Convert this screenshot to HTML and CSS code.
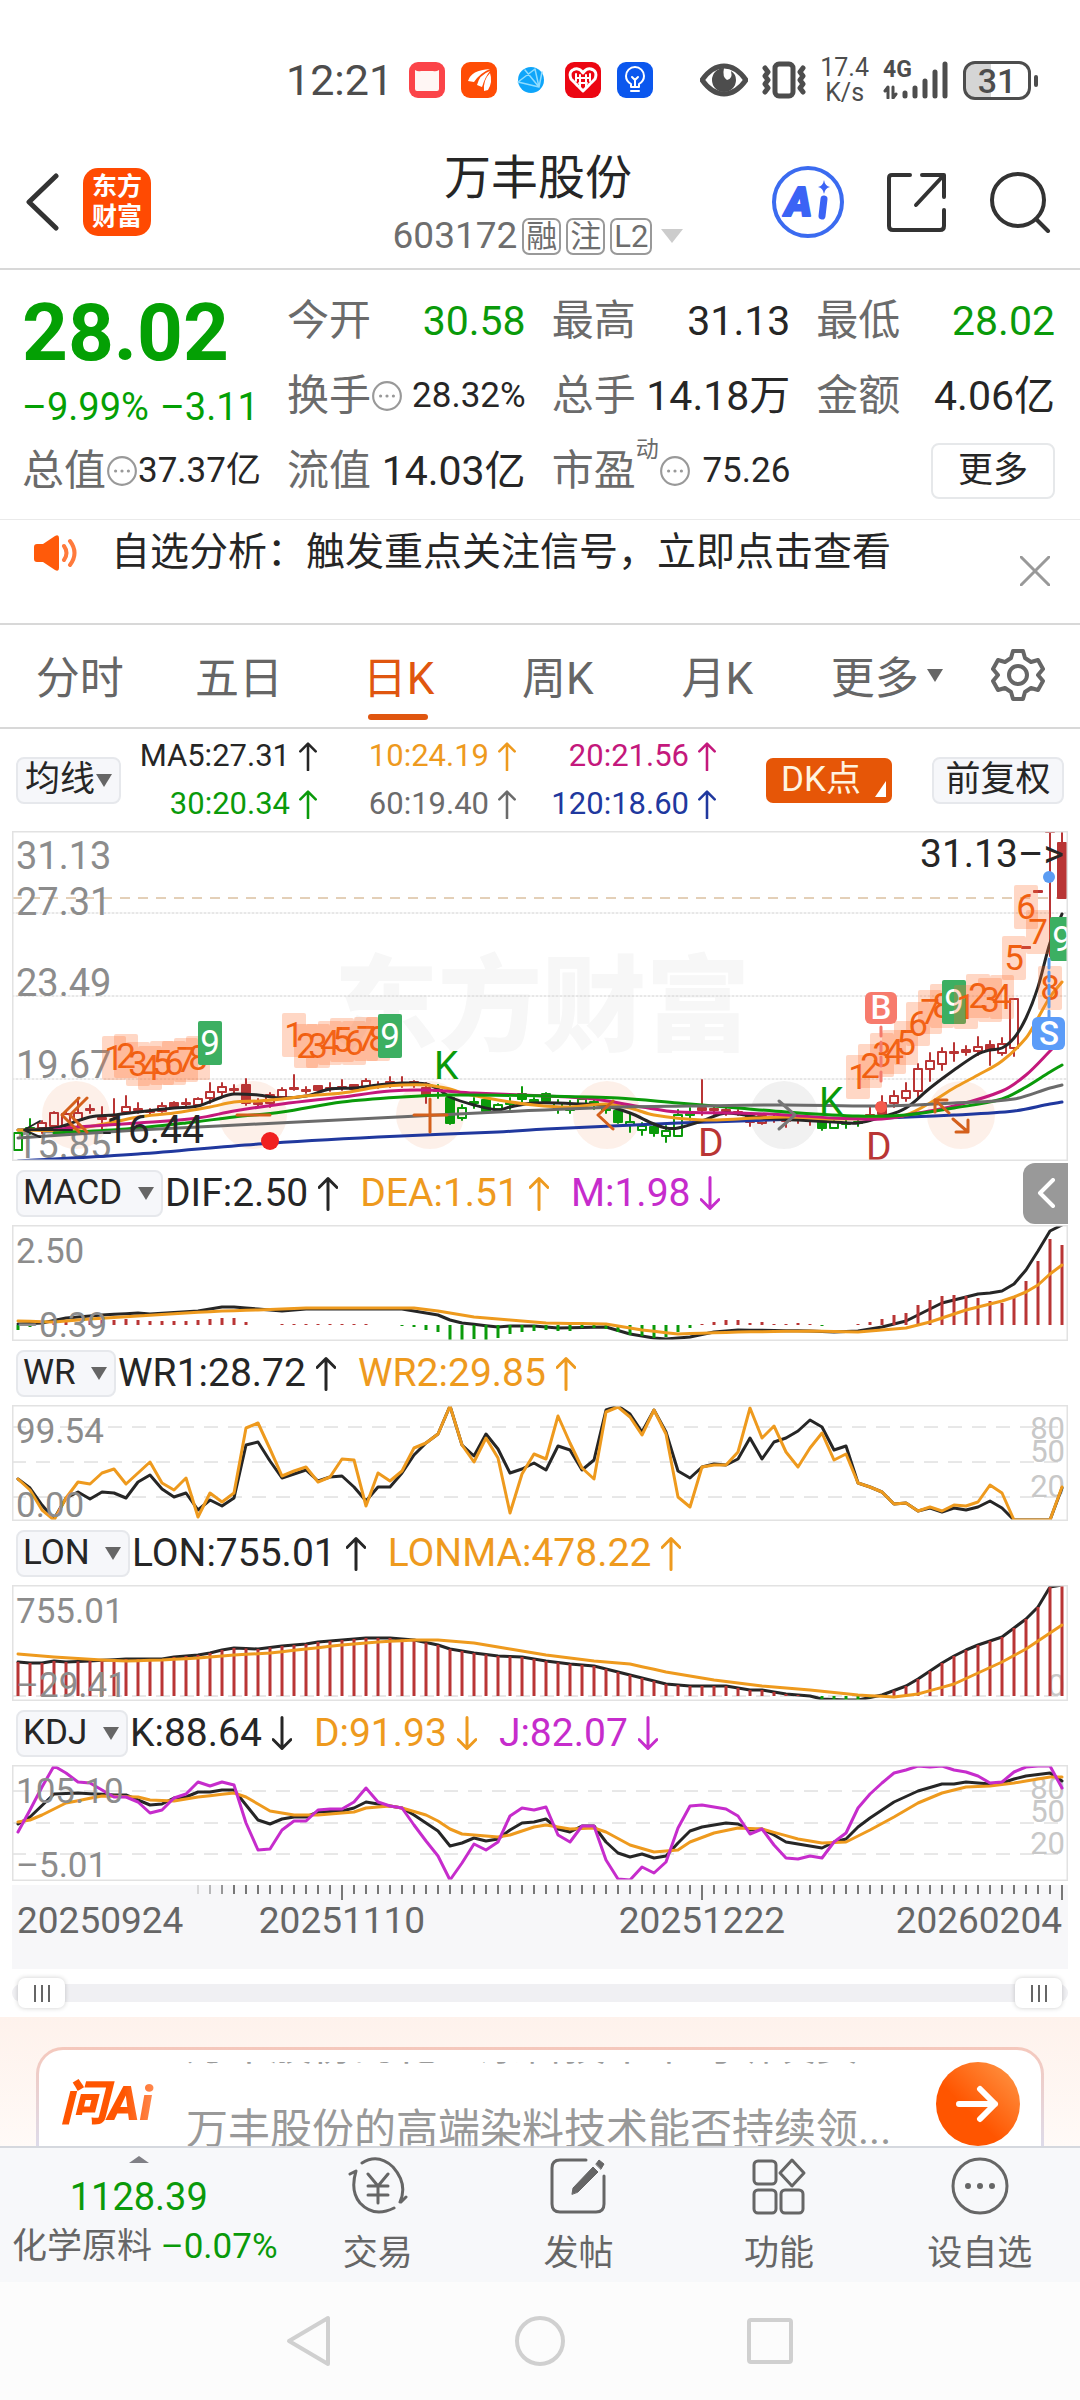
FILE: index.html
```html
<!DOCTYPE html>
<html lang="zh-CN">
<head>
    <meta charset="UTF-8">
    <meta name="viewport" content="width=device-width, initial-scale=1.0">
    <title>万丰股份 603172</title>
    <link rel="stylesheet" href="styles.css">
</head>
<body>
<svg class="defs" width="0" height="0" aria-hidden="true">
    <symbol id="up" viewBox="0 0 20 34"><path d="M10 33V2M1 11l9-9 9 9"/></symbol>
    <symbol id="down" viewBox="0 0 20 34"><path d="M10 1v31M1 23l9 9 9-9"/></symbol>
    <symbol id="dots" viewBox="0 0 30 30"><circle cx="15" cy="15" r="13"/><path class="info-dots" d="M9 15h0M15 15h0M21 15h0"/></symbol>
</svg>

<div class="app">
    <!-- 状态栏 -->
    <div class="status-bar">
        <span class="clock">12:21</span>
        <svg class="app-icon" viewBox="0 0 36 36"><rect width="36" height="36" rx="9" fill="#fb4449"/><path d="M6 8q3 2 6 1h12q3 1 6-1v19q0 2-2 2H8q-2 0-2-2z" fill="#fff6f4"/></svg>
        <svg class="app-icon" viewBox="0 0 36 36"><rect width="36" height="36" rx="9" fill="#ff4c05"/><path d="M7 19Q10 8 29 7 19 11 13 20zM16 23Q18 13 29 9 24 15 21 25zM23 29Q22 18 29 11 32 20 27 28z" fill="#fff"/></svg>
        <svg class="app-icon" viewBox="0 0 36 36"><circle cx="18" cy="18" r="13" fill="#0ea5fa"/><path d="M5 20 22 7l4 18zM12 8l14 17M26 25l3-15" fill="none" stroke="#8fdcff" stroke-width="1.5"/></svg>
        <svg class="app-icon" viewBox="0 0 36 36"><rect width="36" height="36" rx="9" fill="#ec0612"/><path d="M18 29 6 17Q3 9 10 7q5-1 8 4 3-5 8-4 7 2 4 10z" fill="none" stroke="#fff" stroke-width="3" stroke-dasharray="3 1"/><path d="M11 12v7M15 13v12M21 13v12M25 12v7M12 16h12M14 21h8" fill="none" stroke="#fff" stroke-width="2"/></svg>
        <svg class="app-icon" viewBox="0 0 36 36"><rect width="36" height="36" rx="9" fill="#0b57ee"/><path d="M14 25v-3q-5-3-5-8a9 9 0 0 1 18 0q0 5-5 8v3zM14 29h8M18 24v-6l-3-3M18 18l3-3" fill="none" stroke="#fff" stroke-width="2"/></svg>
        <div class="status-right">
            <svg width="48" height="34" viewBox="0 0 48 34"><path d="M2 17Q12 3 24 3t22 14Q36 31 24 31T2 17z"/><path d="M24 5a12 12 0 1 0 12 12q0-6-5-9 2 8-4 9-5-3-3-12z" fill="#4d4d4d" stroke="none"/></svg>
            <svg width="44" height="38" viewBox="0 0 44 38"><rect x="13" y="3" width="18" height="32" rx="4"/><path d="M3 7l3 4-3 4 3 4-3 4 3 4-3 4M41 7l-3 4 3 4-3 4 3 4-3 4 3 4"/></svg>
            <div class="net"><span>17.4</span><span>K/s</span></div>
            <div class="signal">
                <b>4G</b>
                <svg width="66" height="38" viewBox="0 0 66 38"><path class="data-arrows" d="M5 37V26l-3 4M10 26v11l3-4"/><path d="M22 32v3M32 27v8M42 20v15M52 11v24M62 3v32"/></svg>
            </div>
            <div class="battery"><span>31</span></div>
        </div>
    </div>

    <!-- 标题栏 -->
    <header class="header">
        <div class="header-side">
            <button class="icon-btn" aria-label="返回"><svg width="34" height="58" viewBox="0 0 34 58"><path d="M31 3 4 29l27 26" stroke-width="5"/></svg></button>
            <div class="logo">东方<br>财富</div>
        </div>
        <div class="header-title">
            <h1>万丰股份</h1>
            <div class="code">603172<span class="tag">融</span><span class="tag">注</span><span class="tag">L2</span><i class="caret caret-light"></i></div>
        </div>
        <div class="header-side header-tools">
            <button class="icon-btn" aria-label="Ai"><svg width="74" height="74" viewBox="0 0 74 74"><circle cx="37" cy="37" r="34" stroke="#3b6bf0" stroke-width="4"/><text x="14" y="51" class="ai-mark">A</text><path d="M53 34l-2 17" stroke="#3b63f5" stroke-width="7"/><path d="M53 15q1 6 6 7-5 1-6 7-1-6-6-7 5-1 6-7z" fill="#3b63f5" stroke="none"/></svg></button>
            <button class="icon-btn" aria-label="分享"><svg width="62" height="62" viewBox="0 0 62 62"><path d="M24 4H6q-3 0-3 3v48q0 4 4 4h47q4 0 4-4V39M36 4h22v22M57 5 30 34" stroke-width="4"/></svg></button>
            <button class="icon-btn" aria-label="搜索"><svg width="62" height="62" viewBox="0 0 62 62"><circle cx="29" cy="29" r="26" stroke-width="4"/><path d="M47 48l12 12" stroke-width="4"/></svg></button>
        </div>
    </header>

    <!-- 行情 -->
    <section class="quote">
        <div class="price">
            <strong>28.02</strong>
            <div class="change"><span>–9.99%</span><span>–3.11</span></div>
        </div>
        <div class="stat"><span>今开</span><b class="green">30.58</b></div>
        <div class="stat"><span>最高</span><b>31.13</b></div>
        <div class="stat"><span>最低</span><b class="green">28.02</b></div>
        <div class="stat"><span>换手<svg class="info"><use href="#dots"/></svg></span><b class="small">28.32%</b></div>
        <div class="stat"><span>总手</span><b>14.18万</b></div>
        <div class="stat"><span>金额</span><b>4.06亿</b></div>
        <div class="stat"><span>总值<svg class="info"><use href="#dots"/></svg></span><b class="small">37.37亿</b></div>
        <div class="stat"><span>流值</span><b>14.03亿</b></div>
        <div class="stat"><span>市盈<sup>动</sup><svg class="info"><use href="#dots"/></svg></span><b class="small">75.26</b></div>
        <button class="more-btn">更多</button>
    </section>

    <div class="notice">
        <svg width="44" height="36" viewBox="0 0 44 36"><path d="M0 12q0-3 3-3h6L21 1q4-2 4 2v30q0 4-4 2L9 27H3q-3 0-3-3z" fill="#ff5a0a"/><path d="M30 11q5 7 0 14M36 6q9 12 0 24" fill="none" stroke="#ff7a3c" stroke-width="4"/></svg>
        <p>自选分析：触发重点关注信号，立即点击查看</p>
        <button class="icon-btn close" aria-label="关闭"><svg width="30" height="30" viewBox="0 0 30 30"><path d="M1 1l28 28M29 1 1 29" stroke="#999" stroke-width="3"/></svg></button>
    </div>

    <!-- 周期 -->
    <nav class="tabs">
        <button>分时</button>
        <button>五日</button>
        <button class="active">日K</button>
        <button>周K</button>
        <button>月K</button>
        <button>更多<i class="caret"></i></button>
        <button class="gear" aria-label="设置"><svg width="54" height="54" viewBox="0 0 54 54"><path d="M22 3h10l2 7 6 4 7-2 5 9-5 6 5 6-5 9-7-2-6 4-2 7H22l-2-7-6-4-7 2-5-9 5-6-5-6 5-9 7 2 6-4z"/><circle cx="27" cy="27" r="9"/></svg></button>
    </nav>

    <!-- 均线 -->
    <div class="ma-bar">
        <label class="picker"><select aria-label="均线"><option>均线</option></select><i class="caret"></i></label>
        <div class="ma-values">
            <span class="c-black">MA5:27.31<svg><use href="#up"/></svg></span>
            <span class="c-orange">10:24.19<svg><use href="#up"/></svg></span>
            <span class="c-pink">20:21.56<svg><use href="#up"/></svg></span>
            <span class="c-green">30:20.34<svg><use href="#up"/></svg></span>
            <span class="c-gray">60:19.40<svg><use href="#up"/></svg></span>
            <span class="c-blue">120:18.60<svg><use href="#up"/></svg></span>
        </div>
        <button class="dk-btn">DK点</button>
        <button class="fq-btn">前复权</button>
    </div>

    <!-- 图表 -->
    <main class="charts">
        <svg class="chart" id="kline" viewBox="0 0 1056 330">
            <text class="watermark" x="322" y="212">东方财富</text>
            <path class="dotted" d="M0 82h1056M0 165h1056M0 248h1056"/>
            <path class="last-price" d="M0 67h1056"/>
            <g class="ghost">
                <circle cx="64" cy="284" r="34"/><circle cx="241" cy="284" r="34"/><circle cx="418" cy="284" r="34"/>
                <circle cx="595" cy="284" r="34"/><circle class="ghost-gray" cx="772" cy="284" r="34"/><circle cx="949" cy="284" r="34"/>
            </g>
            <g class="axis">
                <text x="4" y="38">31.13</text><text x="4" y="84">27.31</text><text x="4" y="165">23.49</text>
                <text x="4" y="247">19.67</text><text x="4" y="327">15.85</text>
            </g>
            <g id="kline-data"></g>
            <path class="tool-icon" d="M67 267 50 284l17 17M75 267 58 284l17 17M225 284h33M402 284h33M418 268v33M601 270 586 284l15 14M935 269h-12v12M923 269l14 13M944 301h12v-12M956 301 941 288"/>
            <path class="tool-gray" d="M767 270l16 14-16 14"/>
            <circle cx="258" cy="310" r="9" fill="#f02020"/>
            <text class="mark c-black" x="94" y="312">16.44</text>
            <path class="pointer" d="M28 290 12 299l16 7M12 299h48M92 302h6"/>
            <text class="mark c-black" x="908" y="36">31.13–&gt;</text>
            <g class="dk">
                <text class="c-green" x="422" y="248">K</text><text class="c-green" x="807" y="284">K</text>
                <text class="c-red" x="686" y="325">D</text><text class="c-red" x="854" y="329">D</text>
            </g>
            <path d="M869 196v58" stroke="#f47a6c" stroke-width="3" stroke-dasharray="9 6"/>
            <circle cx="869" cy="276" r="6" fill="#f45a4c"/>
            <rect x="853" y="161" width="32" height="32" rx="6" fill="#f77b6d"/>
            <text class="badge" x="869" y="188">B</text>
            <path d="M1037 128v58" stroke="#5b9cf2" stroke-width="3" stroke-dasharray="9 4"/>
            <circle cx="1037" cy="46" r="6" fill="#5b9cf2"/>
            <rect x="1020" y="186" width="33" height="33" rx="6" fill="#5b9cf8"/>
            <text class="badge" x="1037" y="214">S</text>
            <rect class="frame" width="1056" height="330"/>
        </svg>

        <div class="ind-bar">
            <label class="picker"><select aria-label="指标一"><option>MACD</option></select><i class="caret"></i></label>
            <span class="c-black">DIF:2.50<svg><use href="#up"/></svg></span>
            <span class="c-orange">DEA:1.51<svg><use href="#up"/></svg></span>
            <span class="c-purple">M:1.98<svg><use href="#down"/></svg></span>
            <button class="fold" aria-label="展开"><svg width="20" height="30" viewBox="0 0 20 30"><path d="M17 2 4 15l13 13"/></svg></button>
        </div>
        <svg class="chart" viewBox="0 0 1056 116">
            <g id="macd-data"></g>
            <g class="axis axis-sub"><text x="4" y="38">2.50</text><text x="4" y="112">–0.39</text></g>
            <rect class="frame" width="1056" height="116"/>
        </svg>

        <div class="ind-bar">
            <label class="picker"><select aria-label="指标二"><option>WR</option></select><i class="caret"></i></label>
            <span class="c-black">WR1:28.72<svg><use href="#up"/></svg></span>
            <span class="c-orange">WR2:29.85<svg><use href="#up"/></svg></span>
        </div>
        <svg class="chart" viewBox="0 0 1056 116">
            <path class="dashed" d="M0 22h1056M0 57h1056M0 92h1056"/>
            <g class="scale"><text x="1053" y="34">80</text><text x="1053" y="57">50</text><text x="1053" y="92">20</text></g>
            <g id="wr-data"></g>
            <g class="axis axis-sub"><text x="4" y="38">99.54</text><text x="4" y="112">0.00</text></g>
            <rect class="frame" width="1056" height="116"/>
        </svg>

        <div class="ind-bar">
            <label class="picker"><select aria-label="指标三"><option>LON</option></select><i class="caret"></i></label>
            <span class="c-black">LON:755.01<svg><use href="#up"/></svg></span>
            <span class="c-orange">LONMA:478.22<svg><use href="#up"/></svg></span>
        </div>
        <svg class="chart" viewBox="0 0 1056 116">
            <path class="dashed" d="M0 111h1056"/>
            <g class="scale"><text x="1053" y="111">0</text></g>
            <g id="lon-data"></g>
            <g class="axis axis-sub"><text x="4" y="38">755.01</text><text x="4" y="112">–29.41</text></g>
            <rect class="frame" width="1056" height="116"/>
        </svg>

        <div class="ind-bar">
            <label class="picker"><select aria-label="指标四"><option>KDJ</option></select><i class="caret"></i></label>
            <span class="c-black">K:88.64<svg><use href="#down"/></svg></span>
            <span class="c-orange">D:91.93<svg><use href="#down"/></svg></span>
            <span class="c-purple">J:82.07<svg><use href="#down"/></svg></span>
        </div>
        <svg class="chart" viewBox="0 0 1056 116">
            <path class="dashed" d="M0 26h1056M0 58h1056M0 89h1056"/>
            <g class="scale"><text x="1053" y="34">80</text><text x="1053" y="57">50</text><text x="1053" y="89">20</text></g>
            <g id="kdj-data"></g>
            <g class="axis axis-sub"><text x="4" y="38">105.10</text><text x="4" y="112">–5.01</text></g>
            <rect class="frame" width="1056" height="116"/>
        </svg>

        <svg class="chart timeline" viewBox="0 0 1056 84">
            <g id="ticks"></g>
            <text x="5" y="48">20250924</text>
            <text x="330" y="48" text-anchor="middle">20251110</text>
            <text x="690" y="48" text-anchor="middle">20251222</text>
            <text x="1050" y="48" text-anchor="end">20260204</text>
        </svg>

        <div class="range">
            <input type="range" min="0" max="100" value="0" aria-label="起始">
            <input type="range" min="0" max="100" value="100" aria-label="结束">
        </div>
    </main>

    <!-- 问Ai -->
    <section class="ask">
        <div class="ask-card">
            <div class="ask-logo">问Ai</div>
            <div class="ask-text">
                <p>万丰股份的化工原料技术平均研发费一</p>
                <p>万丰股份的高端染料技术能否持续领...</p>
            </div>
            <button class="ask-go" aria-label="提问"><svg width="44" height="38" viewBox="0 0 44 38"><path d="M3 19h36M24 4l15 15-15 15"/></svg></button>
        </div>
    </section>

    <!-- 底部导航 -->
    <nav class="bottom-nav">
        <a href="#" class="index">
            <i class="caret caret-up"></i>
            <b>1128.39</b>
            <span>化学原料 <em>–0.07%</em></span>
        </a>
        <a href="#"><svg viewBox="0 0 64 60"><path d="M16 7Q32-3 47 11 62 28 54 46M4 18l6-3Q4 35 14 47q14 15 34 5M60 41l-5 5M22 18l10 12 10-12M22 30h20M22 39h20M32 30v17"/></svg>交易</a>
        <a href="#"><svg viewBox="0 0 64 60"><path d="M40 4H14q-8 0-8 8v36q0 8 8 8h36q8 0 8-8V20"/><path d="M26 38l1-6L47 11l5 5-20 20zM50 8l3-4 5 4-3 5z" fill="#666" stroke-width="1"/></svg>发帖</a>
        <a href="#"><svg viewBox="0 0 64 60"><rect x="7" y="5" width="22" height="23" rx="4"/><rect x="7" y="34" width="22" height="23" rx="4"/><rect x="34" y="34" width="22" height="23" rx="4"/><path d="M45 4l12 13-12 13-12-13z"/></svg>功能</a>
        <a href="#"><svg viewBox="0 0 64 60"><circle cx="32" cy="30" r="27"/><path class="dots" d="M20 30h0M32 30h0M44 30h0"/></svg>设自选</a>
    </nav>

    <div class="system-nav">
        <svg viewBox="0 0 52 52"><path d="M44 3v46L5 26z"/></svg>
        <svg viewBox="0 0 52 52"><circle cx="26" cy="26" r="23"/></svg>
        <svg viewBox="0 0 52 52"><rect x="5" y="5" width="42" height="42" rx="2"/></svg>
    </div>
</div>
<script src="script.js"></script>
</body>
</html>
```
FILE: styles.css
```css
* {
    box-sizing: border-box;
}
body {
    margin: 0;
    background: #fff;
    color: #262626;
    font-family: Roboto, "Noto Sans CJK SC", sans-serif;
}
button, select {
    font-family: inherit;
    color: inherit;
    border: none;
    background: none;
    padding: 0;
}
svg {
    fill: none;
    stroke-linecap: round;
    stroke-linejoin: round;
    flex-shrink: 0;
}
.defs {
    position: absolute;
}
.app {
    display: flex;
    flex-direction: column;
    height: 100vh;
    min-height: 2300px;
    overflow: hidden;
}
.green, .c-green { color: #0a9a0a; }
.c-black { color: #262626; }
.c-orange { color: #ee9a1e; }
.c-pink { color: #c4187c; }
.c-gray { color: #6b6b6b; }
.c-blue { color: #20389e; }
.c-purple { color: #c62ccc; }
.c-red { color: #b93535; }

.caret {
    display: inline-block;
    border: 8px solid transparent;
    border-top: 13px solid #666;
    border-bottom: 0;
}
.caret-light {
    border-width: 14px 11px 0;
    border-top-color: #ccc;
    margin-left: 4px;
}
.caret-up {
    border: 10px solid transparent;
    border-bottom: 7px solid #808086;
    border-top: 0;
}

/* 状态栏 */
.status-bar {
    display: flex;
    align-items: center;
    height: 160px;
    padding: 0 49px 0 286px;
    color: #4d4d4d;
    gap: 16px;
}
.clock {
    font-size: 43px;
}
.app-icon {
    width: 36px;
    height: 36px;
}
.status-right {
    display: flex;
    align-items: center;
    gap: 14px;
    margin-left: auto;
    stroke: #4d4d4d;
    stroke-width: 5px;
}
.net {
    display: flex;
    flex-direction: column;
    align-items: center;
    font-size: 25px;
    line-height: 25px;
    stroke: none;
}
.signal {
    position: relative;
    display: flex;
}
.signal b {
    position: absolute;
    top: -3px;
    font-size: 23px;
    line-height: 24px;
    stroke: none;
}
.data-arrows {
    stroke-width: 3px;
}
.battery {
    position: relative;
    width: 68px;
    height: 39px;
    border: 3px solid #4d4d4d;
    border-radius: 12px;
    background: linear-gradient(90deg, #d5d5d5 40%, #fff 40%);
    font-size: 34px;
    font-weight: 500;
    line-height: 34px;
    text-align: center;
}
.battery::after {
    content: "";
    position: absolute;
    right: -10px;
    top: 11px;
    width: 4px;
    height: 12px;
    border-radius: 2px;
    background: #4d4d4d;
}

/* 标题栏 */
.header {
    display: flex;
    justify-content: space-between;
    height: 110px;
    padding: 0 29px 0 25px;
    border-bottom: 2px solid #d8d8d8;
}
.header-side {
    flex: 1;
    display: flex;
    align-items: center;
    gap: 24px;
    padding-bottom: 24px;
}
.header-tools {
    justify-content: flex-end;
    gap: 41px;
}
.icon-btn {
    display: flex;
    stroke: #333;
}
.logo {
    width: 68px;
    height: 68px;
    border-radius: 15px;
    background: #ff4a02;
    color: #fff;
    font-size: 25px;
    font-weight: 700;
    line-height: 30px;
    text-align: center;
    padding-top: 4px;
}
.header-title {
    display: flex;
    flex-direction: column;
    align-items: center;
}
.header-title h1 {
    margin: -9px 0 0;
    font-size: 47px;
    font-weight: 400;
    line-height: 54px;
}
.code {
    display: flex;
    align-items: center;
    gap: 5px;
    margin-top: 9px;
    font-size: 37px;
    line-height: 44px;
    color: #6e6e6e;
}
.tag {
    border: 2px solid #999;
    border-radius: 7px;
    padding: 0 2px;
    font-size: 31px;
    line-height: 33px;
}
.ai-mark {
    fill: #3b63f5;
    stroke: #3b63f5;
    stroke-width: 2px;
    font-size: 41px;
    font-weight: 900;
    font-style: italic;
}

/* 行情 */
.quote {
    display: grid;
    grid-template-columns: repeat(4, 1fr);
    grid-template-rows: 75px 75px 75px;
    column-gap: 26px;
    padding: 13px 25px 11px 22px;
    border-bottom: 1px solid #eaeaea;
}
.price {
    grid-row: span 2;
    color: #04a004;
}
.price strong {
    display: block;
    font-size: 80px;
    font-weight: 700;
    line-height: 100px;
}
.change {
    display: flex;
    justify-content: space-between;
    font-size: 38px;
    line-height: 48px;
    padding-right: 2px;
}
.stat {
    display: flex;
    align-items: center;
    justify-content: space-between;
    white-space: nowrap;
    line-height: 50px;
}
.stat > span {
    display: flex;
    align-items: center;
    font-size: 42px;
    color: #6b6b6b;
}
.stat sup {
    align-self: flex-start;
    margin-top: -16px;
    font-size: 23px;
    line-height: 40px;
}
.stat b {
    font-size: 41px;
    font-weight: 400;
}
.stat .small {
    font-size: 35px;
}
.info {
    width: 32px;
    height: 32px;
    stroke: #999;
    stroke-width: 2px;
}
.info-dots {
    stroke-width: 3px;
}
.more-btn {
    align-self: center;
    justify-self: end;
    width: 124px;
    height: 56px;
    border: 2px solid #e6e8ea;
    border-radius: 8px;
    font-size: 35px;
    line-height: 48px;
}
.notice {
    display: flex;
    align-items: flex-start;
    height: 105px;
    padding: 15px 30px 0 34px;
    border-bottom: 2px solid #d8d8d8;
}
.notice p {
    margin: -7px 0 0 33px;
    font-size: 39px;
    line-height: 48px;
}
.close {
    margin: 21px 0 0 auto;
}

/* 周期 */
.tabs {
    display: grid;
    grid-template-columns: repeat(5, 160fr) 180fr 84fr;
    height: 104px;
    padding-right: 20px;
    border-bottom: 2px solid #d8d8d8;
}
.tabs button {
    display: flex;
    align-items: center;
    justify-content: center;
    gap: 8px;
    position: relative;
    padding-bottom: 2px;
    font-size: 44px;
    color: #666;
}
.tabs .active {
    color: #e0560f;
}
.tabs .active::after {
    content: "";
    position: absolute;
    bottom: 7px;
    width: 60px;
    height: 6px;
    border-radius: 3px;
    background: #e0560f;
}
.gear {
    stroke: #666;
    stroke-width: 4px;
}

.picker {
    display: flex;
    align-items: center;
    height: 47px;
    padding: 0 8px;
    border: 2px solid #e6e8ec;
    border-radius: 8px;
    background: #f6f7fa;
}
.picker select {
    appearance: none;
    font-size: 35px;
    line-height: 42px;
}
.ma-bar {
    display: flex;
    align-items: center;
    height: 102px;
    padding: 0 16px;
}
.ma-values {
    display: grid;
    grid-template-columns: 190px 199px 200px;
    row-gap: 10px;
    margin-left: 6px;
    margin-right: auto;
    font-size: 31px;
    line-height: 38px;
}
.ma-values span {
    display: flex;
    align-items: center;
    justify-content: flex-end;
    gap: 9px;
}
.ma-values svg {
    width: 18px;
    height: 29px;
    stroke: currentColor;
    stroke-width: 3px;
}
.ma-bar .picker {
    padding: 0 7px;
}
.dk-btn {
    position: relative;
    width: 126px;
    height: 45px;
    padding-right: 16px;
    border-radius: 7px;
    background: #e65607;
    color: #fff3e0;
    font-size: 35px;
    line-height: 42px;
}
.dk-btn::after {
    content: "";
    position: absolute;
    right: 6px;
    bottom: 6px;
    border-left: 11px solid transparent;
    border-bottom: 16px solid #fff;
}
.fq-btn {
    width: 132px;
    height: 47px;
    margin-left: 40px;
    border: 2px solid #e6e8ec;
    border-radius: 8px;
    background: #f6f7fa;
    font-size: 35px;
    line-height: 42px;
}

/* 图表 */
.charts {
    padding: 0 12px;
}
.chart {
    display: block;
    width: 100%;
}
.frame {
    stroke: #e2e2e2;
    stroke-width: 3px;
}
.watermark {
    fill: #f7f7f7;
    font-size: 104px;
    font-weight: 900;
}
.dotted {
    stroke: #d0d0d0;
    stroke-dasharray: 2 2;
}
.dashed {
    stroke: #d0d0d0;
    stroke-width: 1px;
    stroke-linecap: butt;
    stroke-dasharray: 14 10;
}
.last-price {
    stroke: #c8a070;
    stroke-linecap: butt;
    stroke-dasharray: 10 8;
}
.ghost {
    fill: #fdeee6;
    opacity: 0.85;
}
.ghost-gray {
    fill: #efefef;
}
.axis {
    fill: #8c8c8c;
    font-size: 38px;
}
.axis-sub {
    font-size: 35px;
}
.scale {
    fill: #c8c8c8;
    font-size: 31px;
    text-anchor: end;
}
.mark, .dk {
    font-size: 39px;
    fill: currentColor;
}
.dk text {
    fill: currentColor;
}
.pointer {
    stroke: #262626;
    stroke-width: 2px;
}
.tool-icon {
    stroke: #d4601c;
    stroke-width: 3px;
}
.tool-gray {
    stroke: #777;
    stroke-width: 3px;
}
.badge {
    fill: #fff;
    font-size: 33px;
    font-weight: 500;
    text-anchor: middle;
}
.line {
    stroke: currentColor;
    stroke-width: 3px;
}
.bar {
    stroke: currentColor;
    stroke-width: 3px;
    stroke-linecap: butt;
}
.candle {
    stroke: currentColor;
    stroke-width: 2px;
}
.turn-box {
    fill: #ff7030;
    opacity: 0.28;
}
.turn-nine {
    fill: #3caf62;
}
.turn-num {
    fill: #f05f10;
    font-size: 35px;
    text-anchor: middle;
}
.turn-num.nine {
    fill: #fff;
}
.tick {
    stroke: #777;
    stroke-width: 2px;
    stroke-linecap: butt;
}
.timeline {
    margin-top: 4px;
    background: #f7f7f9;
}
.timeline text {
    fill: #666;
    font-size: 37px;
}

.ind-bar {
    display: flex;
    align-items: center;
    height: 64px;
    padding-left: 4px;
    font-size: 39px;
}
.ind-bar > span {
    display: flex;
    align-items: center;
    gap: 10px;
    margin-right: 22px;
}
.ind-bar > span svg {
    width: 20px;
    height: 35px;
    stroke: currentColor;
    stroke-width: 3px;
}
.ind-bar .picker {
    gap: 15px;
    margin-right: 2px;
    padding: 0 7px 0 5px;
}
.fold {
    display: flex;
    align-items: center;
    justify-content: center;
    width: 45px;
    height: 61px;
    margin-left: auto;
    border-radius: 12px 0 0 12px;
    background: #999;
    stroke: #fff;
    stroke-width: 4px;
}

.range {
    position: relative;
    height: 18px;
    margin: 15px 0;
    border-radius: 9px;
    background: #f0f0f3;
}
.range input {
    position: absolute;
    top: -6px;
    left: 6px;
    width: calc(100% - 12px);
    height: 30px;
    margin: 0;
    appearance: none;
    background: none;
    pointer-events: none;
}
.range input::-webkit-slider-thumb {
    appearance: none;
    pointer-events: auto;
    width: 47px;
    height: 30px;
    border-radius: 7px;
    background: linear-gradient(90deg, #666 2px, transparent 2px 7px, #666 7px 9px, transparent 9px 14px, #666 14px) center / 16px 17px no-repeat #fff;
    box-shadow: 0 0 5px rgba(0, 0, 0, 0.2);
}

/* 问Ai */
.ask {
    flex: 1 1 0;
    min-height: 0;
    overflow: hidden;
    padding: 30px 36px 0;
    background: linear-gradient(#fef2ec, #fffaf7);
}
.ask-card {
    display: flex;
    height: 150px;
    padding: 12px 21px;
    border: 3px solid transparent;
    border-radius: 27px;
    background: linear-gradient(#fff, #fff) padding-box, linear-gradient(#f5c8bc, #dcdcec 70%) border-box;
}
.ask-logo {
    width: 126px;
    font-size: 48px;
    font-weight: 900;
    font-style: italic;
    line-height: 84px;
    color: transparent;
    background: linear-gradient(90deg, #ff5500 50%, #ff9460 80%) text;
}
.ask-text {
    flex: 1;
    overflow: hidden;
    white-space: nowrap;
    font-size: 42px;
    line-height: 84px;
    color: #999;
}
.ask-text p {
    margin: 0;
}
/* 轮播滚动到第二句 */
.ask-text p:first-child {
    margin-top: -58px;
}
.ask-go {
    display: flex;
    align-items: center;
    justify-content: center;
    width: 84px;
    height: 84px;
    border-radius: 50%;
    background: linear-gradient(45deg, #ff5500 40%, #ff9a4a);
    stroke: #fff;
    stroke-width: 6px;
}

/* 底部导航 */
.bottom-nav {
    display: grid;
    grid-template-columns: 275fr repeat(4, 201fr);
    height: 136px;
    border-top: 2px solid #d5d8de;
    background: #f7f8fa;
}
.bottom-nav a {
    display: flex;
    flex-direction: column;
    align-items: center;
    padding-top: 8px;
    font-size: 35px;
    line-height: 48px;
    color: #666;
    text-decoration: none;
    white-space: nowrap;
}
.bottom-nav svg {
    width: 64px;
    height: 60px;
    margin-bottom: 14px;
    stroke: #666;
    stroke-width: 3px;
}
.bottom-nav .dots {
    stroke-width: 6px;
}
.bottom-nav b {
    margin-top: 10px;
    font-size: 38px;
    font-weight: 400;
    color: #0a9a0a;
}
.bottom-nav .index span {
    padding: 2px 0 0 12px;
}
.bottom-nav em {
    font-style: normal;
    color: #0a9a0a;
}
.system-nav {
    display: flex;
    align-items: center;
    justify-content: center;
    gap: 178px;
    height: 118px;
    background: #fcfcfc;
}
.system-nav svg {
    width: 52px;
    height: 52px;
    stroke: #d0d0d0;
    stroke-width: 4px;
}
```
FILE: script.js
```js
const NS = "http://www.w3.org/2000/svg";
const STEP = 12;
const x = i => 6 + i * STEP;

function add(id, tag, cls, attrs, text) {
    const el = document.createElementNS(NS, tag);
    el.setAttribute("class", cls);
    for (const key in attrs) el.setAttribute(key, attrs[key]);
    if (text !== undefined) el.textContent = text;
    document.getElementById(id).appendChild(el);
}

// 折线：每天一个值
function drawLine(id, color, values) {
    add(id, "polyline", "line " + color, { points: values.map((y, i) => x(i) + "," + y).join(" ") });
}

// 由关键点 [天, y, 天, y ...] 得到平滑曲线
function drawCurve(id, color, flat) {
    const p = [];
    for (let i = 0; i < flat.length; i += 2) p.push([x(flat[i]), flat[i + 1]]);
    let d = "M" + p[0];
    for (let i = 0; i < p.length - 1; i++) {
        const a = p[i - 1] || p[i], b = p[i], c = p[i + 1], e = p[i + 2] || c;
        const k = (c[0] - b[0]) / 3;
        const s1 = c[0] === a[0] ? 0 : (c[1] - a[1]) / (c[0] - a[0]);
        const s2 = e[0] === b[0] ? 0 : (e[1] - b[1]) / (e[0] - b[0]);
        d += `C${b[0] + k},${b[1] + s1 * k} ${c[0] - k},${c[1] - s2 * k} ${c}`;
    }
    add(id, "path", "line " + color, { d });
}

// 关键点补全为每天一个值
function fill(flat) {
    const out = [];
    for (let n = 0; n < flat.length - 2; n += 2) {
        const [i0, y0, i1, y1] = flat.slice(n, n + 4);
        for (let i = i0; i < i1; i++) out[i] = y0 + (y1 - y0) * (i - i0) / (i1 - i0);
    }
    out.push(flat[flat.length - 1]);
    return out;
}

function drawBars(id, base, tops) {
    let up = "", down = "";
    tops.forEach((y, i) => {
        if (y < base) up += `M${x(i)} ${base}V${y}`;
        if (y > base) down += `M${x(i)} ${base}V${y}`;
    });
    add(id, "path", "bar c-red", { d: up });
    add(id, "path", "bar c-green", { d: down });
}

// K线：[天, 最高, 最低, 实体上, 实体下, 类型] r/g 空心, R/G 实心
const candles = [
    [0, 302, 319, 302, 319, "g"], [1, 288, 303, 297, 299, "G"], [2, 290, 302, 292, 297, "r"], [3, 281, 296, 282, 295, "r"],
    [4, 281, 297, 283, 295, "r"], [5, 267, 302, 282, 289, "r"], [6, 274, 282, 278, 279, "R"], [7, 276, 298, 287, 288, "R"],
    [8, 268, 289, 284, 285, "R"], [9, 265, 282, 276, 281, "r"], [10, 272, 282, 278, 279, "R"], [11, 278, 283, 280, 281, "R"],
    [12, 272, 281, 275, 280, "r"], [13, 271, 277, 272, 277, "R"], [14, 268, 276, 272, 273, "R"], [15, 267, 275, 268, 274, "r"],
    [16, 252, 272, 261, 267, "r"], [17, 252, 265, 256, 261, "r"], [18, 254, 262, 258, 259, "R"], [19, 248, 274, 254, 272, "R"],
    [20, 268, 276, 272, 273, "R"], [21, 262, 276, 264, 272, "r"], [22, 257, 267, 259, 266, "r"], [23, 244, 259, 257, 258, "R"],
    [24, 256, 262, 259, 260, "R"], [25, 255, 259, 255, 259, "R"], [26, 252, 260, 257, 258, "R"], [27, 249, 259, 256, 257, "R"],
    [28, 254, 259, 254, 258, "R"], [29, 248, 257, 250, 256, "r"], [30, 251, 257, 254, 255, "R"], [31, 246, 256, 251, 252, "R"],
    [32, 246, 256, 252, 253, "R"], [33, 250, 256, 251, 254, "R"], [34, 252, 272, 257, 264, "R"], [35, 254, 267, 259, 260, "G"],
    [36, 267, 293, 267, 292, "G"], [37, 274, 289, 277, 287, "g"], [38, 267, 277, 271, 272, "G"], [39, 268, 281, 269, 280, "G"],
    [40, 273, 279, 274, 278, "g"], [41, 267, 278, 272, 273, "G"], [42, 256, 272, 263, 268, "G"], [43, 267, 273, 269, 271, "G"],
    [44, 262, 271, 263, 270, "G"], [45, 269, 282, 272, 278, "g"], [46, 270, 282, 276, 279, "g"], [47, 267, 275, 268, 274, "g"],
    [48, 268, 278, 271, 272, "G"], [49, 274, 282, 277, 279, "G"], [50, 279, 292, 280, 291, "G"], [51, 282, 301, 291, 294, "g"],
    [52, 292, 304, 295, 299, "g"], [53, 294, 305, 296, 302, "G"], [54, 295, 311, 300, 305, "g"], [55, 279, 305, 284, 305, "g"],
    [56, 277, 289, 283, 284, "G"], [57, 249, 284, 277, 279, "R"], [58, 275, 283, 278, 279, "R"], [59, 275, 284, 279, 280, "R"],
    [60, 279, 284, 281, 282, "R"], [61, 283, 295, 285, 291, "R"], [62, 283, 293, 285, 292, "r"], [63, 284, 291, 287, 288, "R"],
    [64, 284, 296, 288, 290, "R"], [65, 285, 292, 288, 289, "R"], [66, 287, 294, 289, 290, "R"], [67, 288, 299, 290, 297, "G"],
    [68, 290, 297, 291, 297, "g"], [69, 287, 297, 292, 293, "G"], [70, 288, 295, 291, 292, "G"], [71, 275, 290, 284, 288, "r"],
    [72, 265, 288, 272, 283, "R"], [73, 260, 276, 265, 272, "r"], [74, 252, 270, 260, 267, "r"], [75, 233, 266, 238, 260, "r"],
    [76, 222, 250, 230, 238, "r"], [77, 217, 239, 221, 233, "r"], [78, 212, 230, 221, 222, "R"], [79, 215, 224, 219, 221, "R"],
    [80, 206, 224, 216, 220, "r"], [81, 210, 234, 214, 219, "R"], [82, 207, 224, 213, 222, "r"], [83, 168, 225, 168, 217, "r"],
    [84, 117, 117, 116, 117, "R"], [85, 61, 61, 60, 61, "R"], [86, 0, 125, 0, 1, "R"], [87, 0, 67, 12, 67, "R"]
];
candles.forEach(([i, high, low, top, bottom, type]) => {
    const color = type.toLowerCase() === "r" ? "c-red" : "c-green";
    const solid = type === type.toUpperCase();
    add("kline-data", "path", "candle " + color, { d: `M${x(i)} ${high}V${top}M${x(i)} ${bottom}V${low}` });
    add("kline-data", "rect", "candle " + color, {
        x: x(i) - 4, y: top, width: 8, height: bottom - top, fill: solid ? "currentColor" : "none"
    });
});

drawCurve("kline-data", "c-blue", [0, 330, 10, 323, 20, 313, 30, 306, 40, 301, 44, 298, 55, 292, 65, 288, 72, 287, 78, 284, 83, 280, 86, 273, 87, 271]);
drawCurve("kline-data", "c-black", [0, 299, 3, 297, 4, 294, 6, 286, 8, 284, 10, 281, 13, 277, 15, 275, 17, 266, 18, 263, 20, 264, 22, 267, 24, 265, 26, 258, 28, 257, 30, 254, 32, 252, 34, 253, 35, 258, 36, 266, 38, 274, 40, 279, 41, 276, 43, 272, 47, 273, 49, 275, 51, 282, 53, 293, 54, 297, 55, 297, 57, 290, 59, 282, 62, 287, 65, 289, 68, 291, 70, 292, 72, 286, 74, 277, 76, 257, 78, 239, 80, 223, 81, 219, 82, 217, 83, 207, 84, 187, 85, 156, 86, 112, 87, 83]);
drawCurve("kline-data", "c-orange", [0, 299, 4, 299, 8, 291, 10, 286, 13, 282, 16, 276, 18, 271, 20, 270, 22, 268, 24, 265, 27, 262, 30, 256, 32, 254, 34, 254, 36, 258, 37, 262, 40, 269, 43, 274, 46, 276, 49, 273, 51, 277, 53, 284, 57, 289, 60, 288, 64, 286, 68, 288, 72, 287, 74, 284, 76, 272, 78, 257, 80, 244, 82, 230, 84, 207, 85, 187, 86, 166, 87, 151]);
drawCurve("kline-data", "c-pink", [3, 299, 5, 296, 10, 292, 15, 287, 18, 280, 22, 273, 27, 266, 31, 260, 34, 259, 38, 262, 44, 265, 48, 268, 52, 276, 55, 281, 60, 282, 64, 284, 68, 287, 72, 288, 75, 282, 78, 275, 82, 260, 84, 244, 86, 220, 87, 207]);
drawCurve("kline-data", "c-green", [3, 302, 9, 298, 14, 292, 18, 286, 22, 281, 27, 271, 32, 266, 36, 264, 44, 265, 50, 267, 55, 272, 60, 277, 64, 281, 70, 285, 74, 284, 78, 277, 82, 268, 84, 256, 86, 241, 87, 234]);
drawCurve("kline-data", "c-gray", [0, 307, 10, 299, 20, 293, 30, 287, 40, 281, 50, 276, 56, 275, 64, 274, 72, 275, 78, 272, 83, 268, 86, 257, 87, 254]);

// 九转序列：起始天和每个数字方框的上边
const turns = [
    [8, [205, 203, 211, 215, 210, 210, 207, 205, 190]],
    [23, [182, 193, 193, 190, 187, 190, 186, 186, 183]],
    [70, [224, 213, 202, 199, 190, 171, 159, 153, 149]],
    [79, [154, 143, 147, 144, 105, 54, 79, 135, 86]]
];
turns.forEach(([start, tops]) => tops.forEach((top, n) => {
    const nine = n === 8;
    const cx = x(start + n);
    add("kline-data", "rect", nine ? "turn-nine" : "turn-box", { x: cx - 12, y: top, width: 24, height: 44, rx: 2 });
    add("kline-data", "text", "turn-num" + (nine ? " nine" : ""), { x: cx, y: top + 34 }, n + 1);
}));

const macd = [-5, -2, 0, 2, 3, 3, 5, 5, 5, 6, 5, 4, 4, 4, 4, 5, 6, 7, 7, 3,
    0, 0, 1, 1, 1, 1, 1, 1, 1, 1, 0, 0, -1, -2, -5, -7, -15, -16, -14, -15, -13, -9, -7, -6,
    -5, -6, -6, -3, -3, -4, -7, -10, -11, -13, -12, -7, -3, 1, 3, 5, 5, 2, 3, 1, 1, 2, 1, -1, 0, 0,
    1, 3, 6, 10, 12, 20, 25, 29, 30, 29, 27, 24, 22, 29, 44, 64, 86, 80];
drawLine("macd-data", "c-black", fill([0, 99, 2, 98, 4, 93, 7, 90, 10, 88, 11, 89, 15, 86, 17, 82, 18, 82, 20, 84, 22, 86, 24, 84, 32, 84, 33, 86, 35, 90, 36, 95, 37, 98, 40, 102, 41, 101, 43, 101, 45, 103, 49, 102, 51, 109, 53, 113, 54, 114, 56, 112, 58, 107, 60, 105, 66, 106, 68, 107, 70, 106, 72, 102, 74, 96, 75, 90, 77, 78, 79, 72, 80, 69, 81, 68, 82, 66, 83, 59, 84, 45, 85, 26, 86, 6, 87, 0]));
drawBars("macd-data", 100, macd.map(v => 100 - v));
drawLine("macd-data", "c-orange", fill([0, 96, 3, 97, 6, 94, 10, 91, 14, 88, 17, 86, 20, 85, 24, 83, 33, 83, 35, 86, 38, 92, 41, 95, 44, 98, 49, 99, 52, 105, 55, 109, 60, 107, 66, 106, 70, 107, 72, 105, 74, 103, 76, 97, 79, 85, 82, 76, 83, 72, 84, 67, 85, 60, 86, 49, 87, 40]));

drawLine("wr-data", "c-black", [74, 83, 100, 114, 93, 87, 94, 87, 88, 93, 77, 70, 84, 92, 88, 105, 95, 101, 93, 40, 37, 56,
    73, 69, 65, 76, 72, 71, 82, 96, 82, 82, 68, 50, 38, 29, 1, 40, 51, 29, 44, 68, 64, 58,
    65, 41, 45, 65, 55, 5, 1, 9, 27, 5, 27, 66, 73, 62, 59, 60, 54, 33, 54, 37, 33, 26,
    15, 22, 45, 41, 78, 82, 87, 99, 98, 106, 103, 107, 103, 105, 102, 96, 103, 115, 115, 115, 115, 83]);
drawLine("wr-data", "c-orange", [74, 85, 105, 115, 93, 77, 79, 68, 64, 79, 68, 57, 78, 85, 73, 112, 88, 97, 88, 23, 18, 44,
    71, 66, 62, 77, 72, 54, 55, 101, 68, 76, 66, 43, 38, 29, 1, 40, 57, 33, 53, 108, 69, 49,
    54, 11, 38, 63, 74, 7, 2, 12, 30, 5, 29, 92, 102, 62, 60, 60, 47, 3, 33, 21, 47, 62,
    43, 28, 55, 49, 78, 82, 87, 99, 98, 106, 102, 106, 100, 101, 97, 80, 88, 115, 115, 115, 115, 82]);

const lon = fill([0, 77, 1, 78, 2, 78, 3, 76, 4, 77, 6, 76, 9, 74, 12, 74, 13, 72, 15, 70, 16, 68, 17, 65, 18, 63, 20, 64, 22, 61, 24, 59, 25, 57, 27, 55, 29, 53, 31, 53, 33, 55, 35, 60, 36, 64, 38, 68, 40, 71, 42, 72, 44, 76, 46, 79, 48, 81, 50, 87, 52, 93, 54, 99, 56, 101, 59, 101, 61, 105, 62, 105, 64, 109, 66, 111, 67, 114, 69, 115, 70, 115, 72, 110, 74, 101, 75, 94, 76, 86, 77, 78, 78, 71, 79, 65, 80, 60, 81, 56, 82, 52, 83, 43, 84, 34, 85, 22, 86, 2, 87, 0]);
drawLine("lon-data", "c-black", lon);
drawBars("lon-data", 111, lon);
drawLine("lon-data", "c-orange", fill([0, 69, 3, 72, 7, 75, 9, 76, 12, 75, 15, 73, 18, 70, 21, 68, 24, 64, 27, 60, 30, 57, 33, 55, 35, 55, 38, 58, 41, 64, 44, 70, 48, 76, 51, 79, 54, 87, 58, 95, 62, 101, 66, 105, 70, 110, 73, 112, 75, 109, 78, 99, 80, 88, 82, 77, 84, 64, 86, 48, 87, 40]));

drawLine("kdj-data", "c-black", fill([0, 59, 1, 52, 3, 29, 5, 28, 8, 30, 9, 30, 11, 40, 12, 39, 13, 33, 14, 32, 15, 27, 16, 27, 17, 25, 18, 25, 19, 40, 20, 55, 21, 59, 22, 54, 23, 52, 24, 52, 25, 47, 27, 46, 28, 43, 29, 37, 30, 39, 32, 43, 33, 50, 34, 58, 35, 66, 36, 81, 37, 78, 38, 73, 39, 76, 40, 74, 41, 65, 42, 58, 43, 57, 44, 54, 45, 64, 46, 67, 47, 61, 48, 61, 49, 77, 50, 88, 51, 92, 52, 89, 53, 93, 54, 91, 55, 78, 56, 66, 57, 62, 59, 58, 60, 59, 61, 65, 62, 64, 63, 70, 64, 77, 66, 81, 67, 83, 68, 77, 69, 74, 70, 62, 71, 53, 73, 37, 75, 26, 77, 19, 78, 19, 79, 17, 81, 19, 82, 18, 83, 14, 84, 11, 86, 8, 87, 16]));
drawLine("kdj-data", "c-orange", fill([0, 57, 1, 55, 2, 50, 4, 38, 7, 31, 10, 32, 11, 35, 13, 36, 15, 32, 18, 28, 19, 32, 20, 39, 21, 46, 23, 50, 25, 50, 28, 47, 29, 43, 31, 41, 32, 43, 34, 50, 35, 56, 36, 64, 37, 69, 40, 72, 41, 70, 43, 62, 44, 60, 46, 64, 48, 63, 49, 67, 51, 80, 53, 87, 55, 85, 56, 77, 58, 68, 60, 63, 62, 64, 65, 74, 67, 78, 69, 77, 71, 65, 73, 52, 75, 38, 77, 28, 79, 22, 81, 21, 83, 18, 85, 14, 86, 12, 87, 12]));
drawLine("kdj-data", "c-purple", [67, 45, 22, 1, 8, 17, 18, 25, 32, 32, 37, 48, 45, 33, 29, 17, 21, 17, 20, 58, 85, 84,
    65, 56, 56, 45, 44, 44, 37, 23, 37, 41, 43, 60, 76, 91, 115, 98, 79, 85, 77, 51, 43, 45,
    42, 70, 77, 61, 61, 95, 114, 115, 102, 108, 97, 63, 41, 40, 42, 44, 51, 69, 64, 80, 93, 94,
    91, 93, 77, 68, 43, 29, 18, 8, 5, 1, 2, 1, 5, 7, 11, 18, 17, 7, 2, 1, 1, 23]);

for (let i = 15; i < 88; i++) {
    const major = i % 30 === 27;
    add("ticks", "path", "tick", {
        d: `M${x(i)} 0v${major ? 15 : 9}`,
        opacity: Math.min(1, (i - 14) / 4)
    });
}
```
